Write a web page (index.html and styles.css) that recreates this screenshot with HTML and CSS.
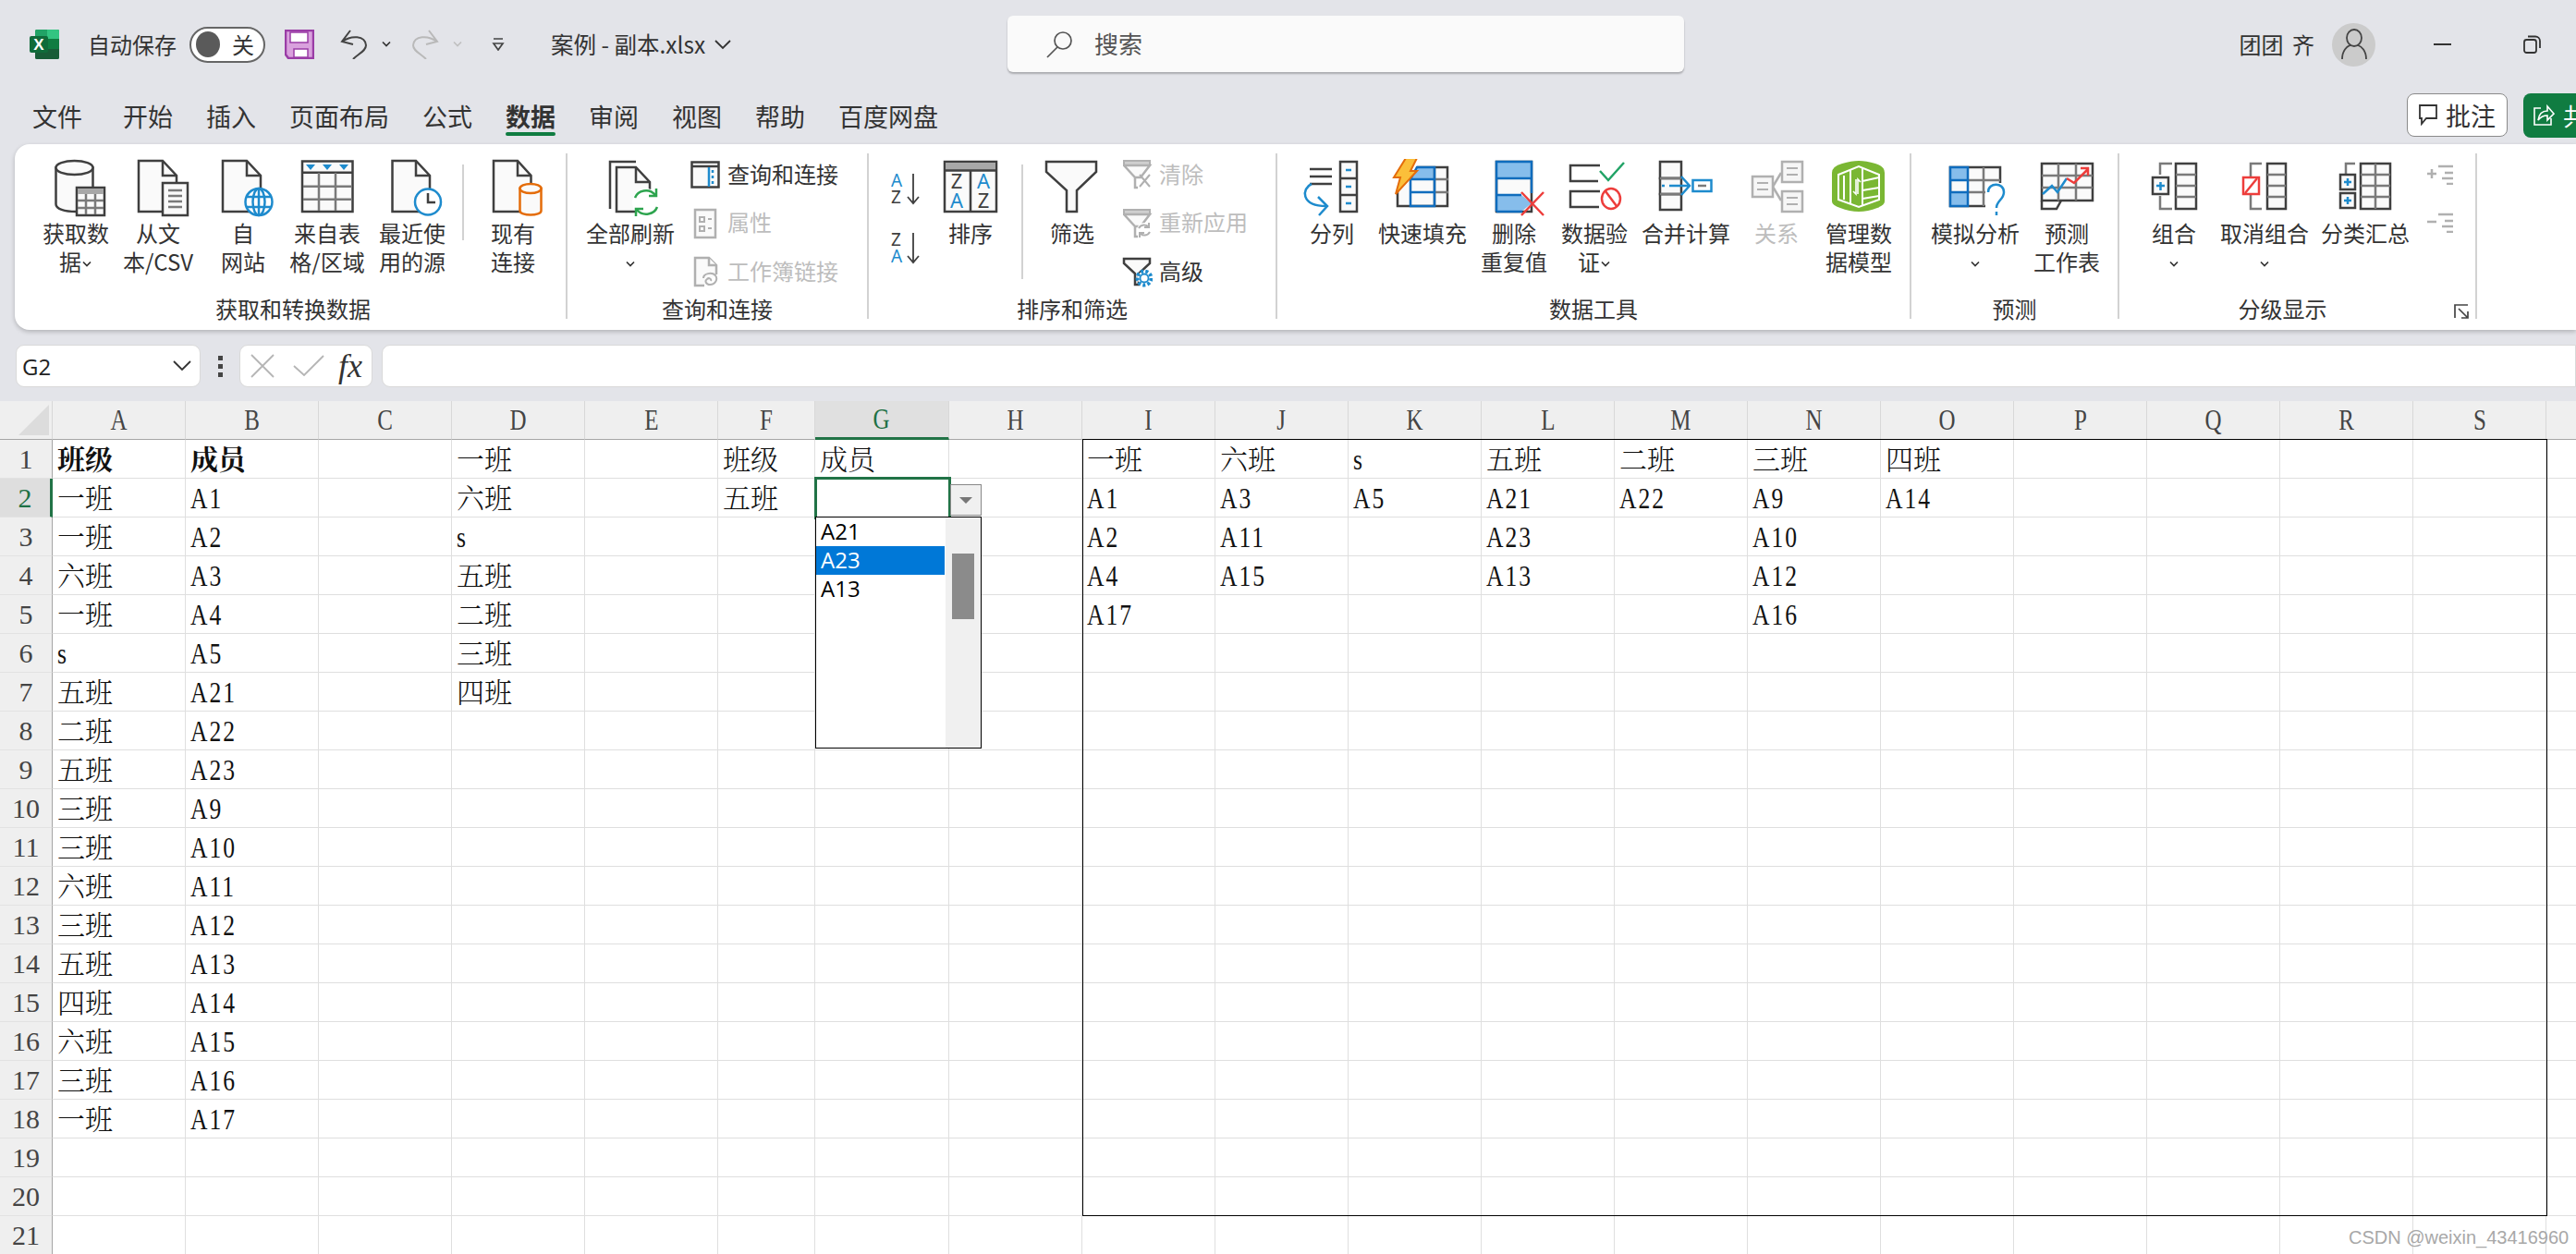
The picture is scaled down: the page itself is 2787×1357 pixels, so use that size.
FILE: index.html
```html
<!DOCTYPE html>
<html lang="zh-CN">
<head>
<meta charset="utf-8">
<title>案例 - 副本.xlsx</title>
<link rel="stylesheet" href="styles.css">
</head>
<body>
<header class="titlebar">
  <div class="qat">
    <svg class="logo" width="32" height="32" viewBox="0 0 32 32"><rect x="6" y="0" width="26" height="32" rx="2" fill="#107c41"/><path d="M6 2a2 2 0 0 1 2-2h22a2 2 0 0 1 2 2v8H6z" fill="#21a366"/><path d="M19 0h11a2 2 0 0 1 2 2v8H19z" fill="#33c481"/><path d="M6 21h26v9a2 2 0 0 1-2 2H8a2 2 0 0 1-2-2z" fill="#185c37"/><rect x="0" y="7" width="20" height="18" rx="2" fill="#0f6b3a"/><text x="10" y="22" class="logo-x">X</text></svg>
    <span class="autosave">自动保存</span>
    <span class="toggle"><span class="toggle-dot"></span><span class="toggle-txt">关</span></span>
    <svg class="save" width="32" height="32" viewBox="0 0 32 32"><path d="M1 1h30v30H4l-3-4z" fill="#d9a1dd" stroke="#9a3da6" stroke-width="2.500"/><rect x="6" y="3" width="19" height="11" fill="#fff" stroke="#9a3da6" stroke-width="1.500"/><rect x="10" y="21" width="15" height="9" fill="#fff" stroke="#9a3da6" stroke-width="1.500"/></svg>
    <svg class="undo" width="30" height="32" viewBox="0 0 30 32"><path class="n1" d="M11 1L2 13l12 3M2 13C12 6 27 6 28 17c0 6-8 9-14 15"/></svg>
    <svg class="chev tiny" width="12" height="8" viewBox="0 0 12 8"><path d="M2 1.500l4 4 4-4"/></svg>
    <svg class="redo" width="30" height="32" viewBox="0 0 30 32"><path class="n2" d="M19 1l9 12-12 3M28 13C18 6 3 6 2 17c0 6 8 9 14 15"/></svg>
    <svg class="chev tiny off" width="12" height="8" viewBox="0 0 12 8"><path d="M2 1.500l4 4 4-4"/></svg>
    <svg class="custom" width="14" height="14" viewBox="0 0 14 14"><path d="M2 1h10M2 6h10l-5 7z" fill="none" stroke="#444" stroke-width="1.700"/></svg>
    <span class="fname">案例 - 副本.xlsx</span>
    <svg class="fchev" width="20" height="12" viewBox="0 0 20 12"><path d="M2 2l8 8 8-8" fill="none" stroke="#333" stroke-width="1.800"/></svg>
  </div>
  <div class="search">
    <svg width="30" height="30" viewBox="0 0 30 30"><circle cx="19" cy="11" r="9" fill="none" stroke="#555" stroke-width="1.700"/><path d="M13 18L2 29" stroke="#555" stroke-width="1.700"/></svg>
    <span>搜索</span>
  </div>
  <div class="winctl">
    <span class="user">团团 齐</span>
    <span class="avatar"><svg width="30" height="36" viewBox="0 0 30 36"><ellipse cx="15" cy="11" rx="8" ry="9" fill="none" stroke="#444" stroke-width="1.800"/><path d="M2 34c0-9 5-14 9-15M28 34c0-9-5-14-9-15" fill="none" stroke="#444" stroke-width="1.800"/></svg></span>
    <span class="minbtn"></span>
    <svg class="restore" width="19" height="20" viewBox="0 0 19 20"><rect x="1" y="5" width="13" height="14" rx="2.500" fill="none" stroke="#333" stroke-width="1.800"/><path d="M5 1.500h8a5 5 0 0 1 5 5V14" fill="none" stroke="#333" stroke-width="1.800"/></svg>
  </div>
</header>

<nav class="tabs">
  <span class="tab first">文件</span>
  <span class="tab">开始</span>
  <span class="tab">插入</span>
  <span class="tab">页面布局</span>
  <span class="tab">公式</span>
  <span class="tab active">数据</span>
  <span class="tab">审阅</span>
  <span class="tab">视图</span>
  <span class="tab">帮助</span>
  <span class="tab">百度网盘</span>
  <div class="tab-actions">
    <span class="btn-comment"><svg width="22" height="24" viewBox="0 0 22 24"><path d="M2 2h18v14H9l-5 6v-6H2z" fill="#fff" stroke="#333" stroke-width="1.800"/></svg>批注</span>
    <span class="btn-share"><svg width="24" height="24" viewBox="0 0 24 24"><path d="M9 4H2v18h18v-7M6 17c1-7 5-10 10-10V2l7 8-7 7v-5c-4 0-7 1-10 5z" fill="none" stroke="#fff" stroke-width="1.600"/></svg>共享</span>
  </div>
</nav>

<section class="ribbon">
  <div class="group g1">
    <div class="items">
      <div class="item w92">
        <svg class="ico" width="72" height="66" viewBox="0 0 72 66"><path class="s" d="M14.500 9.500V49c0 5 9 8 22 8h18V9.500z"/><ellipse class="s" cx="34.500" cy="9.500" rx="20" ry="7.500"/><rect class="s" x="37" y="31" width="30" height="30"/><rect class="fg" x="38" y="32" width="28" height="6"/><path class="g" d="M47 38v22M57 38v22M38 45h28M38 53h28"/></svg>
        <div class="lbl">获取数<br>据<svg class="chev" width="12" height="8" viewBox="0 0 12 8"><path d="M2 1.500l4 4 4-4"/></svg></div>
      </div>
      <div class="item w86">
        <svg class="ico" width="72" height="66" viewBox="0 0 72 66"><path class="s" d="M56 57H15V2h26l15 16z"/><path class="n" d="M41 2v16h15"/><rect class="s" x="41" y="26" width="27" height="35"/><path class="g" d="M47 34h15M47 40h15M47 46h15M47 52h15"/></svg>
        <div class="lbl">从文<br>本/CSV</div>
      </div>
      <div class="item w98">
        <svg class="ico" width="72" height="66" viewBox="0 0 72 66"><path class="s" d="M55 57H14V2h26l15 16z"/><path class="n" d="M40 2v16h15"/><circle cx="53" cy="46.500" r="14.500" fill="#fff" stroke="#1e8bcd" stroke-width="2.500"/><ellipse class="b" cx="53" cy="46.500" rx="6.500" ry="14.500"/><path class="b" d="M53 32v29M39 41h28M39 52h28"/></svg>
        <div class="lbl">自<br>网站</div>
      </div>
      <div class="item w84">
        <svg class="ico" width="72" height="66" viewBox="0 0 72 66"><rect class="s" x="9" y="2.500" width="54.500" height="54.500"/><path class="n" d="M9 14.700h54"/><path class="g" d="M27 15v41M45 15v41M10 29.700h53M10 43.700h53"/><path class="bf" d="M13 6h10l-5 6zM31 6h10l-5 6zM49 6h10l-5 6z"/></svg>
        <div class="lbl">来自表<br>格/区域</div>
      </div>
      <div class="item w100">
        <svg class="ico" width="72" height="66" viewBox="0 0 72 66"><path class="s" d="M55 57H14.500V2H40l15 16z"/><path class="n" d="M40 2v16h15"/><circle cx="53" cy="46.500" r="14" fill="#fff" stroke="#1e8bcd" stroke-width="2.500"/><path class="n" d="M53 37v10h8"/></svg>
        <div class="lbl">最近使<br>用的源</div>
      </div>
      <span class="vsep sep1"></span>
      <div class="item w90">
        <svg class="ico" width="72" height="66" viewBox="0 0 72 66"><path class="s" d="M55.500 57H15V2h26l14.500 16z"/><path class="n" d="M41 2v16h14.500"/><path d="M43.500 32v24c0 6 23 6 23 0V32z" fill="#fafafa" stroke="#e46c0a" stroke-width="2.500"/><ellipse cx="55" cy="32" rx="11.500" ry="5" fill="#fafafa" stroke="#e46c0a" stroke-width="2.500"/></svg>
        <div class="lbl">现有<br>连接</div>
      </div>
    </div>
    <div class="glabel gl1">获取和转换数据</div>
  </div>

  <div class="group g2">
    <div class="items">
      <div class="item w100">
        <svg class="ico" width="72" height="66" viewBox="0 0 72 66"><path class="n" d="M14 54V3h28"/><path class="s" d="M57 57H21V9h21l15 16z"/><path class="n" d="M42 9v16h15"/><circle cx="53" cy="47" r="15" fill="#fff" stroke="none"/><path class="gr" d="M41 42c3-8 15-11 22-3M65 52c-3 8-15 11-22 3M64 32v8h-8M42 62v-8h8"/></svg>
        <div class="lbl">全部刷新<br><svg class="chev" width="12" height="8" viewBox="0 0 12 8"><path d="M2 1.500l4 4 4-4"/></svg></div>
      </div>
      <div class="smallcol sc2">
        <div class="srow"><svg width="34" height="34" viewBox="0 0 34 34"><rect class="s" x="3.500" y="3.500" width="29" height="27"/><path class="n" d="M3 8h30"/><path class="b" d="M22 9v21M26 12v3M26 18v3M26 24v3"/></svg><span>查询和连接</span></div>
        <div class="srow dis"><svg width="34" height="34" viewBox="0 0 34 34"><rect class="d" x="7" y="2" width="22" height="30"/><path class="d1" d="M12 10h5v5h-5zM12 20h5v5h-5zM21 12h4M21 22h4"/></svg><span>属性</span></div>
        <div class="srow dis"><svg width="34" height="34" viewBox="0 0 34 34"><path class="d" d="M30 20V10l-8-8H7v30h10"/><path class="d" d="M22 2v8h8"/><path class="d1" d="M16 24c0-5 9-7 13-3 3 4 0 10-6 10-4 0-6-4-3-6 2-2 5 0 4 2"/></svg><span>工作簿链接</span></div>
      </div>
    </div>
    <div class="glabel">查询和连接</div>
  </div>

  <div class="group g3">
    <div class="items">
      <div class="sortcol">
        <svg width="36" height="36" viewBox="0 0 36 36"><text x="0" y="16" class="tb">A</text><text x="0" y="34" class="td">Z</text><path class="n2d" d="M24 2v32M18 27l6 7 6-7"/></svg>
        <svg width="36" height="36" viewBox="0 0 36 36"><text x="0" y="16" class="td">Z</text><text x="0" y="34" class="tb">A</text><path class="n2d" d="M24 2v32M18 27l6 7 6-7"/></svg>
      </div>
      <div class="item w70 sortitem">
        <svg class="ico" width="72" height="66" viewBox="0 0 72 66"><rect class="s" x="8" y="3" width="56" height="54"/><rect class="fg" x="9" y="4" width="54" height="8"/><path class="n" d="M8 12.500h56M36 12v45"/><text x="21" y="32" class="lg">Z</text><text x="21" y="53" class="lb">A</text><text x="50" y="32" class="lb">A</text><text x="50" y="53" class="lg">Z</text></svg>
        <div class="lbl">排序</div>
      </div>
      <span class="vsep sep3"></span>
      <div class="item w84">
        <svg class="ico" width="72" height="66" viewBox="0 0 72 66"><path class="s" d="M8 3h54v11L41 34v23H30V34L8 14z"/></svg>
        <div class="lbl">筛选</div>
      </div>
      <div class="smallcol sc3">
        <div class="srow dis"><svg width="34" height="34" viewBox="0 0 34 34"><path class="df" d="M3 2h28v5H3z"/><path class="d" d="M3 7h28L21 20H15v11h3M15 20L3 7"/><path class="d1" d="M20 17l11 13M31 17L20 30"/></svg><span>清除</span></div>
        <div class="srow dis"><svg width="34" height="34" viewBox="0 0 34 34"><path class="df" d="M3 2h28v5H3z"/><path class="d" d="M3 7h28L21 20H15v11h3M15 20L3 7"/><circle cx="25" cy="24" r="8" fill="#fff" stroke="none"/><path class="d1" d="M19 22c2-4 8-5 11-1M31 26c-2 4-8 5-11 1M30 16v5h-5M20 32v-5h5"/></svg><span>重新应用</span></div>
        <div class="srow"><svg width="34" height="34" viewBox="0 0 34 34"><path class="s" d="M3 3h28v5L19 19v12h-4V19L3 8z"/><circle cx="25" cy="24" r="7.500" fill="#fff" stroke="#1e8bcd" stroke-width="4" stroke-dasharray="3 2.200"/><circle cx="25" cy="24" r="4.500" fill="#fff" stroke="#1e8bcd" stroke-width="1.800"/></svg><span>高级</span></div>
      </div>
    </div>
    <div class="glabel">排序和筛选</div>
  </div>

  <div class="group g4">
    <div class="items">
      <div class="item w76">
        <svg class="ico" width="72" height="66" viewBox="0 0 72 66"><rect class="s" x="45" y="3" width="18" height="54"/><path class="n" d="M45 21h18M45 39h18M12 11h24M12 19h24M12 27h24"/><path class="b" d="M51 12h6M51 30h6M51 48h6M14 27c-11 5-12 24 16 24M21 41l10 10-9 10"/></svg>
        <div class="lbl">分列</div>
      </div>
      <div class="item w120">
        <svg class="ico" width="72" height="66" viewBox="0 0 72 66"><path class="s" d="M9 34v17h54V9H30"/><path class="fbl" d="M30 9h19v13H23z"/><path class="g" d="M49 9v42M49 22h15M49 36h15"/><path class="bs" d="M23 51V22L30 9h19v42zM23 22h26M23 36h26"/><path d="M18 -1h12l-7 14h7L7 38l5-18H5z" fill="#fbbf3a" stroke="#e46c0a" stroke-width="2"/></svg>
        <div class="lbl">快速填充</div>
      </div>
      <div class="item w78">
        <svg class="ico" width="72" height="66" viewBox="0 0 72 66"><path class="s" d="M17 3h38v54H17z"/><rect class="fbl" x="17" y="3" width="38" height="18"/><path class="fbl" d="M17 39h27l11 9-11 9H17z"/><path class="bs" d="M17 57V3h38v18H17M17 39h27M17 57h28M55 21v16"/><path class="r" d="M44 36l24 25M68 36L44 61"/></svg>
        <div class="lbl">删除<br>重复值</div>
      </div>
      <div class="item w96">
        <svg class="ico" width="72" height="66" viewBox="0 0 72 66"><path class="n" d="M42 7H10v17h30M42 35H10v17h31"/><path class="gk" d="M42 13l9 10 17-19"/><ellipse cx="54" cy="43" rx="10" ry="11" fill="#fff" stroke="#ed3d3b" stroke-width="2.500"/><path class="r" d="M48 35l12 16"/></svg>
        <div class="lbl">数据验<br>证<svg class="chev" width="12" height="8" viewBox="0 0 12 8"><path d="M2 1.500l4 4 4-4"/></svg></div>
      </div>
      <div class="item w102">
        <svg class="ico" width="72" height="66" viewBox="0 0 72 66"><path class="s" d="M8 3h23v18H8zM8 38h23v17H8z"/><path class="s" d="M8 21h23v17H8z"/><path class="g" d="M8 21h23M8 38h23"/><path class="b" d="M10 29h3M18 29h21M31 19l9 10-9 10"/><rect x="43.500" y="23" width="20" height="12" fill="#fff" stroke="#1e8bcd" stroke-width="2.500"/><path class="g" d="M49 29h9"/></svg>
        <div class="lbl">合并计算</div>
      </div>
      <div class="item w94 disitem">
        <svg class="ico" width="72" height="66" viewBox="0 0 72 66"><path class="d" d="M32 30l9-15M32 30l9 15"/><rect class="dp" x="10" y="19" width="22" height="22"/><rect class="dp" x="42" y="3" width="22" height="22"/><rect class="dp" x="42" y="35" width="22" height="22"/><path class="d1" d="M15 26h12M15 33h12M47 10h12M47 17h12M47 42h12M47 49h12"/></svg>
        <div class="lbl">关系</div>
      </div>
      <div class="item w84">
        <svg class="ico" width="72" height="66" viewBox="0 0 72 66"><path d="M7 15Q7 8 18 5 28 2 36 2q8 0 18 3 10 3 10 10v31q0 4-8 7-10 4-20 4t-20-4q-9-3-9-7z" fill="#7ab733"/><path d="M14 17L36 8l22 9v27L36 52 14 44z" fill="none" stroke="#fff" stroke-width="2"/><path d="M27 11v38M40 9v41M40 24l18-4M40 34l18-3M40 43l18-3M20 18v26" fill="none" stroke="#fff" stroke-width="2"/><path d="M33 22v16l-3-3M35 38V22l3 3" fill="none" stroke="#fff" stroke-width="1.600"/></svg>
        <div class="lbl">管理数<br>据模型</div>
      </div>
    </div>
    <div class="glabel">数据工具</div>
  </div>

  <div class="group g5">
    <div class="items">
      <div class="item w106">
        <svg class="ico" width="72" height="66" viewBox="0 0 72 66"><rect class="s" x="9" y="9" width="54" height="42"/><rect class="fbl" x="9" y="9" width="18" height="14"/><rect class="fbl" x="9" y="36" width="18" height="15"/><path class="g" d="M45 9v42M27 23h36M27 36h36"/><path class="bs" d="M9 9h19v42H9zM9 23h19M9 36h19"/><rect x="47" y="26" width="24" height="36" fill="#fff" stroke="none"/><path class="b" d="M50 36c0-11 17-11 17 0 0 8-8 9-8 17M59 57v4"/></svg>
        <div class="lbl">模拟分析<br><svg class="chev" width="12" height="8" viewBox="0 0 12 8"><path d="M2 1.500l4 4 4-4"/></svg></div>
      </div>
      <div class="item w92">
        <svg class="ico" width="72" height="66" viewBox="0 0 72 66"><rect class="s" x="9" y="5" width="55" height="40"/><path class="g" d="M27 5v40M46 5v40M9 18h55M9 31h55"/><path class="n" d="M9 45v9h16l5-9"/><path class="b" d="M10 38l10-9 6 7 10-15"/><path class="r" d="M36 21l8 5 15-15M51 10h8v8"/></svg>
        <div class="lbl">预测<br>工作表</div>
      </div>
    </div>
    <div class="glabel">预测</div>
  </div>

  <div class="group g6">
    <div class="items">
      <div class="item w96">
        <svg class="ico" width="72" height="66" viewBox="0 0 72 66"><rect class="s" x="38" y="5" width="22" height="49"/><path class="g" d="M38 17h22M38 29h22M38 41h22M34 5H21v12M21 40v14h13"/><rect class="s" x="13" y="20" width="17" height="18"/><path class="b" d="M17 29h9M21.500 25v9"/></svg>
        <div class="lbl">组合<br><svg class="chev" width="12" height="8" viewBox="0 0 12 8"><path d="M2 1.500l4 4 4-4"/></svg></div>
      </div>
      <div class="item w100">
        <svg class="ico" width="72" height="66" viewBox="0 0 72 66"><rect class="s" x="39" y="5" width="20" height="49"/><path class="g" d="M39 17h20M39 29h20M39 41h20M33 5H21v15M21 38v16h12"/><rect x="13" y="20" width="17" height="18" fill="#fff" stroke="#ed3d3b" stroke-width="2.500"/><path class="r" d="M15 37l13-16"/></svg>
        <div class="lbl">取消组合<br><svg class="chev" width="12" height="8" viewBox="0 0 12 8"><path d="M2 1.500l4 4 4-4"/></svg></div>
      </div>
      <div class="item w118">
        <svg class="ico" width="72" height="66" viewBox="0 0 72 66"><rect class="s" x="31" y="5" width="32" height="49"/><path class="g" d="M47 5v49M31 17h32M31 29h32M31 41h32M25 5H15v11"/><rect class="s" x="9" y="17" width="16" height="16"/><rect class="s" x="9" y="37" width="16" height="16"/><path class="b" d="M13 25h8M17 21v8M13 45h8M17 41v8"/></svg>
        <div class="lbl">分类汇总</div>
      </div>
      <div class="outline">
        <svg width="30" height="22" viewBox="0 0 30 22"><path class="d" d="M1 10h10M6 5v10M13 2h16M20 9h9M17 15h12M22 21h7"/></svg>
        <svg width="30" height="22" viewBox="0 0 30 22"><path class="d" d="M1 10h10M13 2h16M20 9h9M17 15h12M22 21h7"/></svg>
      </div>
    </div>
    <div class="glabel gl6">分级显示</div>
    <svg class="launch" width="17" height="16" viewBox="0 0 17 16"><path d="M1 15V1h14M5 5l10 10M15 8v7H8" fill="none" stroke="#444" stroke-width="1.700"/></svg>
  </div>
</section>

<div class="fbar">
  <div class="namebox"><span>G2</span><svg width="20" height="12" viewBox="0 0 20 12"><path d="M1 1l9 9 9-9" fill="none" stroke="#333" stroke-width="1.800"/></svg></div>
  <div class="dots"><i></i><i></i><i></i></div>
  <div class="fnbox">
    <svg width="26" height="26" viewBox="0 0 26 26"><path d="M1 1l24 24M25 1L1 25" stroke="#b5b5b5" stroke-width="1.800"/></svg>
    <svg width="34" height="24" viewBox="0 0 34 24"><path d="M1 12l11 10L33 1" fill="none" stroke="#b5b5b5" stroke-width="1.800"/></svg>
    <span class="fx">fx</span>
  </div>
  <div class="finput"></div>
</div>

<main class="sheetwrap">
<table class="sheet">
<colgroup><col class="c-h"><col class="c-n"><col class="c-n"><col class="c-n"><col class="c-n"><col class="c-n"><col class="c-f"><col class="c-g"><col class="c-n"><col class="c-n"><col class="c-n"><col class="c-n"><col class="c-n"><col class="c-n"><col class="c-n"><col class="c-n"><col class="c-n"><col class="c-n"><col class="c-n"><col class="c-n"><col class="c-n"></colgroup>
<thead>
<tr><th class="corner"><div class="tri"></div></th><th><span class="cl">A</span></th><th><span class="cl">B</span></th><th><span class="cl">C</span></th><th><span class="cl">D</span></th><th><span class="cl">E</span></th><th><span class="cl">F</span></th><th class="csel"><span class="cl">G</span></th><th><span class="cl">H</span></th><th><span class="cl">I</span></th><th><span class="cl">J</span></th><th><span class="cl">K</span></th><th><span class="cl">L</span></th><th><span class="cl">M</span></th><th><span class="cl">N</span></th><th><span class="cl">O</span></th><th><span class="cl">P</span></th><th><span class="cl">Q</span></th><th><span class="cl">R</span></th><th><span class="cl">S</span></th><th><span class="cl">T</span></th></tr>
</thead>
<tbody>
<tr><th>1<td class="bold">班级<td class="bold">成员<td><td>一班<td><td>班级<td>成员<td><td>一班<td>六班<td><span class="lat">s</span><td>五班<td>二班<td>三班<td>四班<td><td><td><td><td></tr>
<tr><th class="rsel">2<td>一班<td><span class="lat">A1</span><td><td>六班<td><td>五班<td><td><td><span class="lat">A1</span><td><span class="lat">A3</span><td><span class="lat">A5</span><td><span class="lat">A21</span><td><span class="lat">A22</span><td><span class="lat">A9</span><td><span class="lat">A14</span><td><td><td><td><td></tr>
<tr><th>3<td>一班<td><span class="lat">A2</span><td><td><span class="lat">s</span><td><td><td><td><td><span class="lat">A2</span><td><span class="lat">A11</span><td><td><span class="lat">A23</span><td><td><span class="lat">A10</span><td><td><td><td><td><td></tr>
<tr><th>4<td>六班<td><span class="lat">A3</span><td><td>五班<td><td><td><td><td><span class="lat">A4</span><td><span class="lat">A15</span><td><td><span class="lat">A13</span><td><td><span class="lat">A12</span><td><td><td><td><td><td></tr>
<tr><th>5<td>一班<td><span class="lat">A4</span><td><td>二班<td><td><td><td><td><span class="lat">A17</span><td><td><td><td><td><span class="lat">A16</span><td><td><td><td><td><td></tr>
<tr><th>6<td><span class="lat">s</span><td><span class="lat">A5</span><td><td>三班<td><td><td><td><td><td><td><td><td><td><td><td><td><td><td><td></tr>
<tr><th>7<td>五班<td><span class="lat">A21</span><td><td>四班<td><td><td><td><td><td><td><td><td><td><td><td><td><td><td><td></tr>
<tr><th>8<td>二班<td><span class="lat">A22</span><td><td><td><td><td><td><td><td><td><td><td><td><td><td><td><td><td><td></tr>
<tr><th>9<td>五班<td><span class="lat">A23</span><td><td><td><td><td><td><td><td><td><td><td><td><td><td><td><td><td><td></tr>
<tr><th>10<td>三班<td><span class="lat">A9</span><td><td><td><td><td><td><td><td><td><td><td><td><td><td><td><td><td><td></tr>
<tr><th>11<td>三班<td><span class="lat">A10</span><td><td><td><td><td><td><td><td><td><td><td><td><td><td><td><td><td><td></tr>
<tr><th>12<td>六班<td><span class="lat">A11</span><td><td><td><td><td><td><td><td><td><td><td><td><td><td><td><td><td><td></tr>
<tr><th>13<td>三班<td><span class="lat">A12</span><td><td><td><td><td><td><td><td><td><td><td><td><td><td><td><td><td><td></tr>
<tr><th>14<td>五班<td><span class="lat">A13</span><td><td><td><td><td><td><td><td><td><td><td><td><td><td><td><td><td><td></tr>
<tr><th>15<td>四班<td><span class="lat">A14</span><td><td><td><td><td><td><td><td><td><td><td><td><td><td><td><td><td><td></tr>
<tr><th>16<td>六班<td><span class="lat">A15</span><td><td><td><td><td><td><td><td><td><td><td><td><td><td><td><td><td><td></tr>
<tr><th>17<td>三班<td><span class="lat">A16</span><td><td><td><td><td><td><td><td><td><td><td><td><td><td><td><td><td><td></tr>
<tr><th>18<td>一班<td><span class="lat">A17</span><td><td><td><td><td><td><td><td><td><td><td><td><td><td><td><td><td><td></tr>
<tr><th>19<td><td><td><td><td><td><td><td><td><td><td><td><td><td><td><td><td><td><td><td></tr>
<tr><th>20<td><td><td><td><td><td><td><td><td><td><td><td><td><td><td><td><td><td><td><td></tr>
<tr><th>21<td><td><td><td><td><td><td><td><td><td><td><td><td><td><td><td><td><td><td><td></tr>
</tbody>
</table>
<div class="tablebox"></div>
<div class="selection"></div>
<div class="ddbtn"><span class="ddtri"></span></div>
<div class="ddlist">
  <div class="ddopts">
    <div class="ddopt">A21</div>
    <div class="ddopt on">A23</div>
    <div class="ddopt">A13</div>
  </div>
  <div class="ddscroll"><div class="ddthumb"></div></div>
</div>
<div class="watermark">CSDN @weixin_43416960</div>
</main>
</body>
</html>
```

FILE: styles.css
```css
* { box-sizing: border-box; }
html, body { margin: 0; height: 100%; }
body {
  width: 2787px; height: 1357px; overflow: hidden;
  background: #e3e4e9; color: #333;
  font-family: "Noto Sans CJK SC", "Noto Sans", sans-serif;
  font-size: 24px;
}
svg { display: block; flex: none; }

/* title bar */
.titlebar { height: 96px; display: flex; align-items: center; padding-left: 32px; }
.qat { width: 1058px; flex: none; display: flex; align-items: center; }
.logo-x { font: bold 17px "Liberation Sans", sans-serif; fill: #fff; text-anchor: middle; }
.autosave { margin-left: 31px; width: 98px; font-size: 24px; white-space: nowrap; margin-top: -2px; }
.toggle { margin-left: 12px; width: 82px; height: 39px; border: 2px solid #666; border-radius: 20px; background: #fff; display: flex; align-items: center; padding-left: 5px; flex: none; }
.toggle-dot { width: 26px; height: 28px; border-radius: 50%; background: #5a5a5a; }
.toggle-txt { margin-left: 13px; font-size: 24px; line-height: 1; }
.save { margin-left: 21px; }
.undo { margin-left: 28px; }
.n1 { fill: none; stroke: #444; stroke-width: 2; }
.n2 { fill: none; stroke: #b9b9b9; stroke-width: 2; }
.tiny { margin-left: 15px; }
.redo { margin-left: 21px; }
.chev { display: inline-block; vertical-align: middle; margin-left: 14px; }
.chev path { fill: none; stroke: #333; stroke-width: 1.700; }
.chev.off path { stroke: #c0c0c0; }
.lbl > br + .chev { margin-left: 0; }
.custom { margin-left: 31px; }
.fname { margin-left: 50px; width: 172px; white-space: nowrap; font-size: 24.500px; margin-top: -2px; }
.fchev { margin-left: 4px; }

.search { width: 732px; height: 61px; flex: none; background: #fafafa; border-radius: 6px; box-shadow: 0 2px 2px rgba(0,0,0,.25); display: flex; align-items: center; padding-left: 41px; gap: 23px; color: #555; font-size: 26px; margin-top: -1px; }
.search span { margin-top: -2px; }
.winctl { flex: 1; display: flex; align-items: center; justify-content: flex-end; padding-right: 38px; }
.user { font-size: 24px; white-space: nowrap; word-spacing: 4px; margin-top: -2px; }
.avatar { margin-left: 19px; width: 47px; height: 47px; border-radius: 50%; background: #cbcbcb; display: flex; align-items: center; justify-content: center; }
.minbtn { margin-left: 63px; width: 19px; height: 2px; background: #333; }
.restore { margin-left: 78px; }

/* tabs */
.tabs { height: 60px; display: flex; align-items: center; gap: 36px; padding-left: 35px; }
.tab { position: relative; font-size: 27px; white-space: nowrap; line-height: 36px; color: #333; }
.tab.first { margin-right: 8px; }
.tab.active { font-weight: 700; }
.tab.active::after { content: ""; position: absolute; left: 0; right: 0; top: 35px; height: 4px; border-radius: 2px; background: #107c41; }
.tab-actions { margin-left: auto; width: 183px; flex: none; display: flex; gap: 17px; margin-top: -3px; }
.btn-comment { width: 109px; height: 47px; flex: none; border: 1.500px solid #8a8a8a; border-radius: 8px; background: #fff; display: flex; align-items: center; gap: 8px; padding-left: 11px; font-size: 27px; white-space: nowrap; }
.btn-share { width: 110px; height: 48px; flex: none; border-radius: 8px; background: #107c41; color: #fff; display: flex; align-items: center; gap: 9px; padding-left: 10px; font-size: 26px; white-space: nowrap; }

/* ribbon */
.ribbon { margin-left: 16px; height: 201px; padding-top: 10px; background: #fff; border-radius: 16px 0 0 16px; box-shadow: 0 2px 5px rgba(0,0,0,.22); display: flex; align-items: flex-start; }
.group { position: relative; height: 179px; flex: none; border-right: 2px solid #d2d2d2; display: flex; flex-direction: column; }
.g1 { width: 598px; } .g2 { width: 326px; } .g3 { width: 442px; } .g4 { width: 686px; } .g5 { width: 225px; } .g6 { width: 387px; }
.items { height: 156px; display: flex; align-items: flex-start; }
.g1 .items { padding-left: 20px; } .g2 .items { padding-left: 18px; } .g3 .items { padding-left: 24px; }
.g4 .items { padding-left: 21px; } .g5 .items { padding-left: 16px; } .g6 .items { padding-left: 11px; }
.glabel { height: 23px; line-height: 23px; text-align: center; font-size: 24px; white-space: nowrap; }
.gl1 { padding-left: 6px; }
.gl6 { padding-right: 32px; }
.launch { position: absolute; right: 6px; bottom: 0; }
.item { flex: none; display: flex; flex-direction: column; align-items: center; padding-top: 6px; }
.lbl { line-height: 31px; text-align: center; white-space: nowrap; font-size: 24px; color: #333; margin-top: -2px; }
.disitem .lbl { color: #bdbdbd; }
.w70 { width: 70px; } .w76 { width: 76px; } .w78 { width: 78px; } .w84 { width: 84px; } .w86 { width: 86px; }
.w90 { width: 90px; } .w92 { width: 92px; } .w94 { width: 94px; } .w96 { width: 96px; } .w98 { width: 98px; }
.w100 { width: 100px; } .w102 { width: 102px; } .w106 { width: 106px; } .w118 { width: 118px; } .w120 { width: 120px; }
.vsep { flex: none; width: 2px; height: 82px; margin-top: 12px; background: #d2d2d2; }
.sep1 { margin-left: 4px; margin-right: 8px; }
.sep3 { margin-left: 20px; margin-right: 11px; height: 124px; }
.smallcol { flex: none; display: flex; flex-direction: column; gap: 6.500px; }
.sc2 { margin-left: 13px; }
.sc3 { margin-left: 11px; }
.srow { height: 46px; display: flex; align-items: center; gap: 8px; white-space: nowrap; font-size: 24px; }
.srow span { margin-top: -4px; }
.sc3 .srow { gap: 7px; }
.srow.dis { color: #bdbdbd; }
.sortcol { flex: none; width: 36px; padding-top: 20px; display: flex; flex-direction: column; gap: 28px; }
.sortitem { margin-left: 15px; }
.outline { flex: none; margin-left: 7px; padding-top: 12px; display: flex; flex-direction: column; gap: 30px; }

/* icon strokes */
.s { fill: #fafafa; stroke: #3f3f3f; stroke-width: 2.500; }
.n { fill: none; stroke: #3f3f3f; stroke-width: 2.500; }
.n2d { fill: none; stroke: #3f3f3f; stroke-width: 1.800; }
.g { fill: none; stroke: #7a7a7a; stroke-width: 2.500; }
.fg { fill: #a8a8a8; }
.b { fill: none; stroke: #1e8bcd; stroke-width: 2.500; }
.bf { fill: #1e8bcd; }
.bs { fill: none; stroke: #0f6cbd; stroke-width: 2.500; }
.fbl { fill: #86bdeb; }
.r { fill: none; stroke: #ed3d3b; stroke-width: 2.500; }
.gk { fill: none; stroke: #21a366; stroke-width: 2.500; }
.gr { fill: none; stroke: #2da44e; stroke-width: 2.500; }
.d { fill: #fafafa; stroke: #b0b0b0; stroke-width: 2.500; }
.dp { fill: #f6f6f6; stroke: #b0b0b0; stroke-width: 2.500; }
.d1 { fill: none; stroke: #b0b0b0; stroke-width: 2; }
.df { fill: #cfcfcf; stroke: #b0b0b0; stroke-width: 2; }
.tb { font: 19px "Noto Sans", sans-serif; fill: #1e8bcd; }
.td { font: 19px "Noto Sans", sans-serif; fill: #3f3f3f; }
.lb { font: 22px "Noto Sans", sans-serif; fill: #1e8bcd; text-anchor: middle; }
.lg { font: 22px "Noto Sans", sans-serif; fill: #3f3f3f; text-anchor: middle; }

/* formula bar */
.fbar { height: 77px; padding-top: 16px; padding-left: 17px; display: flex; align-items: flex-start; }
.namebox { width: 200px; height: 46px; flex: none; background: #fff; border: 1px solid #d9d9d9; border-radius: 9px; display: flex; align-items: center; justify-content: space-between; padding: 0 9px 0 6px; font: 24px "Open Sans", sans-serif; color: #222; }
.dots { width: 42px; height: 46px; flex: none; display: flex; flex-direction: column; align-items: center; justify-content: center; gap: 4px; }
.dots i { width: 5px; height: 5px; background: #444; }
.fnbox { width: 144px; height: 46px; flex: none; background: #fff; border: 1px solid #d9d9d9; border-radius: 9px; display: flex; align-items: center; padding-left: 11px; gap: 20px; }
.fx { font: italic 36px/40px "Liberation Serif", serif; color: #333; letter-spacing: 0; margin-left: -5px; }
.finput { flex: 1; margin-left: 10px; height: 46px; background: #fff; border: 1px solid #d9d9d9; border-radius: 9px 0 0 9px; }

/* sheet */
.sheetwrap { position: relative; height: 923px; background: #fff; overflow: hidden; }
.sheet { table-layout: fixed; width: 2899px; border-collapse: separate; border-spacing: 0; font-family: "Noto Serif CJK SC", "Noto Sans CJK SC", serif; }
.c-h { width: 57px; } .c-n { width: 144px; } .c-f { width: 105px; } .c-g { width: 145px; }
.sheet tr { height: 42px; }
.sheet th { padding: 0; height: 42px; background: #efefef; font-family: "Liberation Serif", serif; font-weight: 400; font-size: 30px; line-height: 34px; color: #444; text-align: center; border-right: 1px solid #d8d8d8; border-bottom: 1px solid #e2e2e2; }
.sheet thead th { border-bottom: 1px solid #a5a5a5; }
.sheet tbody th { border-right: 1px solid #a5a5a5; }
.sheet td { padding: 0 0 3px 5px; height: 42px; background: #fff; font-size: 30px; font-weight: 300; color: #111; line-height: 34px; white-space: nowrap; border-right: 1px solid #dfdfdf; border-bottom: 1px solid #dfdfdf; }
.sheet td.bold { font-weight: 700; }
.corner .tri { width: 33px; height: 33px; margin: 0 3px 0 auto; background: #dcdcdc; clip-path: polygon(100% 0, 100% 100%, 0 100%); }
.cl { display: inline-block; font-size: 32px; line-height: 34px; transform: scaleX(.78); }
.sheet thead th.csel { background: #e0e0e0; color: #1e7145; border-bottom: 3px solid #217346; }
.sheet tbody th.rsel { background: #dedede; color: #1e7145; border-right: 3px solid #217346; }
.lat { display: inline-block; font-family: "Liberation Serif", serif; font-size: 32px; font-weight: 400; line-height: 34px; letter-spacing: 2.500px; transform: translateY(1px) scaleX(.8); transform-origin: 0 50%; color: #111; }

.tablebox { position: absolute; left: 1171px; top: 41px; width: 1585px; height: 841px; border: 1px solid #000; }
.selection { position: absolute; left: 881px; top: 82px; width: 148px; height: 46px; border: 3px solid #217346; }
.ddbtn { position: absolute; left: 1028px; top: 90px; width: 34px; height: 34px; background: #f0f0f0; border: 1px solid #888; display: flex; align-items: center; justify-content: center; }
.ddtri { width: 0; height: 0; border-left: 7px solid transparent; border-right: 7px solid transparent; border-top: 7px solid #777; }
.ddlist { position: absolute; left: 882px; top: 125px; width: 180px; height: 251px; background: #fff; border: 1px solid #000; display: flex; }
.ddopts { width: 140px; flex: none; font: 24px/29px "Open Sans", sans-serif; color: #000; }
.ddopt { height: 31px; padding-left: 5px; margin-right: 1px; }
.ddopt.on { background: #0078d7; color: #fff; }
.ddscroll { flex: 1; background: #f0f0f0; padding: 39px 7px 0; }
.ddthumb { height: 71px; background: #8b8b8b; }
.watermark { position: absolute; left: 2541px; top: 893px; font: 20px/24px "Liberation Sans", sans-serif; color: #a8a8a8; white-space: nowrap; }
```
